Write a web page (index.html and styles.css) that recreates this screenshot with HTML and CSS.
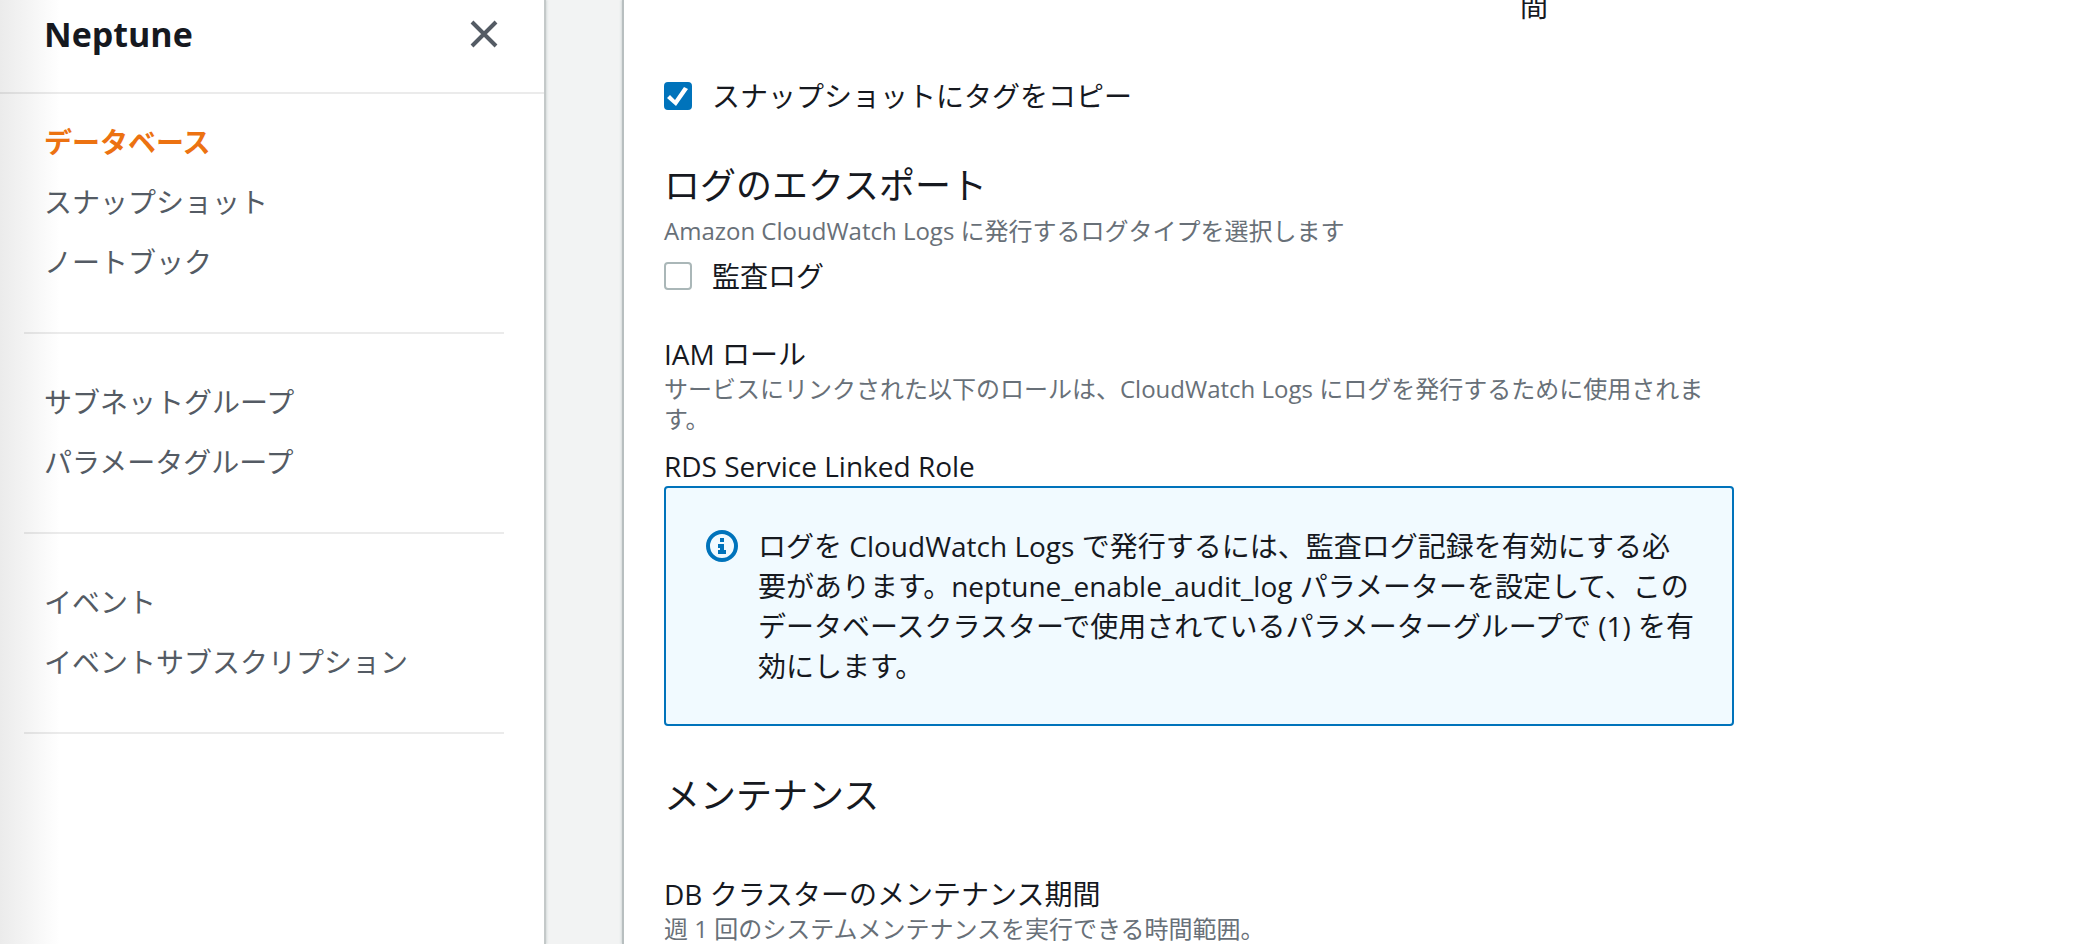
FILE: index.html
```html
<!DOCTYPE html>
<html lang="ja">
<head>
  <meta charset="UTF-8" />
  <meta name="viewport" content="width=device-width, initial-scale=1.0" />
  <title>Neptune</title>
  <link rel="stylesheet" href="styles.css">
</head>
<body>
  <div class="layout">
    <nav class="sidebar">
      <div class="sidebar-header">
        <h2>Neptune</h2>
        <button class="close" type="button" aria-label="閉じる">
          <svg viewBox="0 0 28 28" fill="none" stroke="currentColor" stroke-width="4">
            <path d="M2 2l24 24M26 2L2 26" />
          </svg>
        </button>
      </div>
      <ul class="nav-group">
        <li><a class="active" href="#">データベース</a></li>
        <li><a href="#">スナップショット</a></li>
        <li><a href="#">ノートブック</a></li>
      </ul>
      <ul class="nav-group">
        <li><a href="#">サブネットグループ</a></li>
        <li><a href="#">パラメータグループ</a></li>
      </ul>
      <ul class="nav-group">
        <li><a href="#">イベント</a></li>
        <li><a href="#">イベントサブスクリプション</a></li>
      </ul>
    </nav>

    <main class="panel">
      <div class="form">
        <div class="duration">
          <span class="unit">間</span>
        </div>

        <div class="check">
          <input type="checkbox" id="copy-tags" checked>
          <label for="copy-tags">スナップショットにタグをコピー</label>
        </div>

        <section class="log-export">
          <h3>ログのエクスポート</h3>
          <p class="hint">Amazon CloudWatch Logs に発行するログタイプを選択します</p>
          <div class="check">
            <input type="checkbox" id="audit-log">
            <label for="audit-log">監査ログ</label>
          </div>
        </section>

        <section class="field">
          <h4>IAM ロール</h4>
          <p class="hint">サービスにリンクされた以下のロールは、CloudWatch Logs にログを発行するために使用されます。</p>
          <p class="value">RDS Service Linked Role</p>
        </section>

        <div class="info">
          <svg class="info-icon" viewBox="0 0 32 32" fill="none">
            <circle cx="16" cy="16" r="14" stroke="currentColor" stroke-width="4" />
            <path d="M14 8h4v4h-4zM12 14h6v6h2v4h-8v-4h2v-2h-2z" fill="currentColor" />
          </svg>
          <p>ログを CloudWatch Logs で発行するには、監査ログ記録を有効にする必要があります。neptune_enable_audit_log パラメーターを設定して、このデータベースクラスターで使用されているパラメーターグループで (1) を有効にします。</p>
        </div>

        <section class="maintenance">
          <h3>メンテナンス</h3>
          <div class="field">
            <h4>DB クラスターのメンテナンス期間</h4>
            <p class="hint">週 1 回のシステムメンテナンスを実行できる時間範囲。</p>
          </div>
        </section>
      </div>
    </main>
  </div>
</body>
</html>
```
FILE: styles.css
```css
* {
  box-sizing: border-box;
}

body {
  margin: 0;
  font-family: "Open Sans", "Noto Sans CJK JP", sans-serif;
  font-size: 28px;
  line-height: 40px;
  color: #16191f;
  background: #f2f3f3;
  overflow: hidden;
}

h2, h3, h4, p, ul {
  margin: 0;
  padding: 0;
  font-weight: 400;
}

.layout {
  display: flex;
  height: 100vh;
}

/* sidebar */
.sidebar {
  flex: 0 0 546px;
  background: linear-gradient(to right, #ebebeb, #fff 60px);
  border-right: 2px solid #c4c9c9;
  box-shadow: 1px 0 2px #d5dbdb;
}

.sidebar-header {
  display: flex;
  justify-content: space-between;
  align-items: center;
  height: 94px;
  padding: 0 46px 24px 44px;
  border-bottom: 2px solid rgba(0, 0, 0, 0.08);
}

.sidebar-header h2 {
  font-size: 34px;
  font-weight: 700;
}

.close {
  display: flex;
  padding: 0;
  border: none;
  background: none;
  color: #545b64;
  cursor: pointer;
}

.close svg {
  width: 28px;
  height: 28px;
}

.nav-group {
  margin: 0 40px 0 24px;
  padding: 48px 20px 50px;
  border-bottom: 2px solid rgba(0, 0, 0, 0.08);
  list-style: none;
  display: flex;
  flex-direction: column;
  gap: 20px;
}

.sidebar-header + .nav-group {
  padding-top: 28px;
}

.nav-group a {
  color: #545b64;
  text-decoration: none;
}

.nav-group a.active {
  color: #ec7211;
  font-weight: 700;
}

/* content */
.panel {
  flex: 1;
  margin-left: 76px;
  padding: 0 40px;
  background: #fff;
  border-left: 2px solid #b8bfc0;
  box-shadow: -1px 0 2px #d5dbdb;
}

/* the form is scrolled part way down */
.form {
  max-width: 1070px;
  margin-top: -14px;
}

.duration {
  display: grid;
  grid-template-columns: 4fr 1fr;
  margin-bottom: 50px;
}

.unit {
  grid-column: 2;
}

.check {
  display: flex;
  align-items: center;
  gap: 20px;
}

.check input {
  appearance: none;
  flex: none;
  width: 28px;
  height: 28px;
  margin: 0;
  border: 2px solid #aab7b8;
  border-radius: 4px;
  background: #fff;
}

.check input:checked {
  border-color: #0073bb;
  background: #0073bb;
}

.check input:checked::before {
  content: "";
  display: block;
  width: 24px;
  height: 24px;
  background: #fff;
  clip-path: polygon(1px 14px, 4px 11px, 9px 16px, 18px 3px, 22px 5px, 10px 22px);
}

h3 {
  font-size: 36px;
  line-height: 44px;
}

.hint {
  font-size: 24px;
  line-height: 30px;
  color: #687078;
}

.log-export {
  margin-top: 48px;
}

.log-export .hint {
  margin: 8px 0 10px;
}

.field {
  margin-top: 38px;
}

.value {
  margin-top: 12px;
}

.info {
  display: flex;
  gap: 20px;
  padding: 38px 36px 38px 40px;
  border: 2px solid #0073bb;
  border-radius: 4px;
  background: #f1faff;
}

.info-icon {
  flex: none;
  width: 32px;
  height: 32px;
  margin-top: 4px;
  color: #0073bb;
}

.maintenance {
  margin-top: 48px;
}

.maintenance .field {
  margin-top: 56px;
}
```
